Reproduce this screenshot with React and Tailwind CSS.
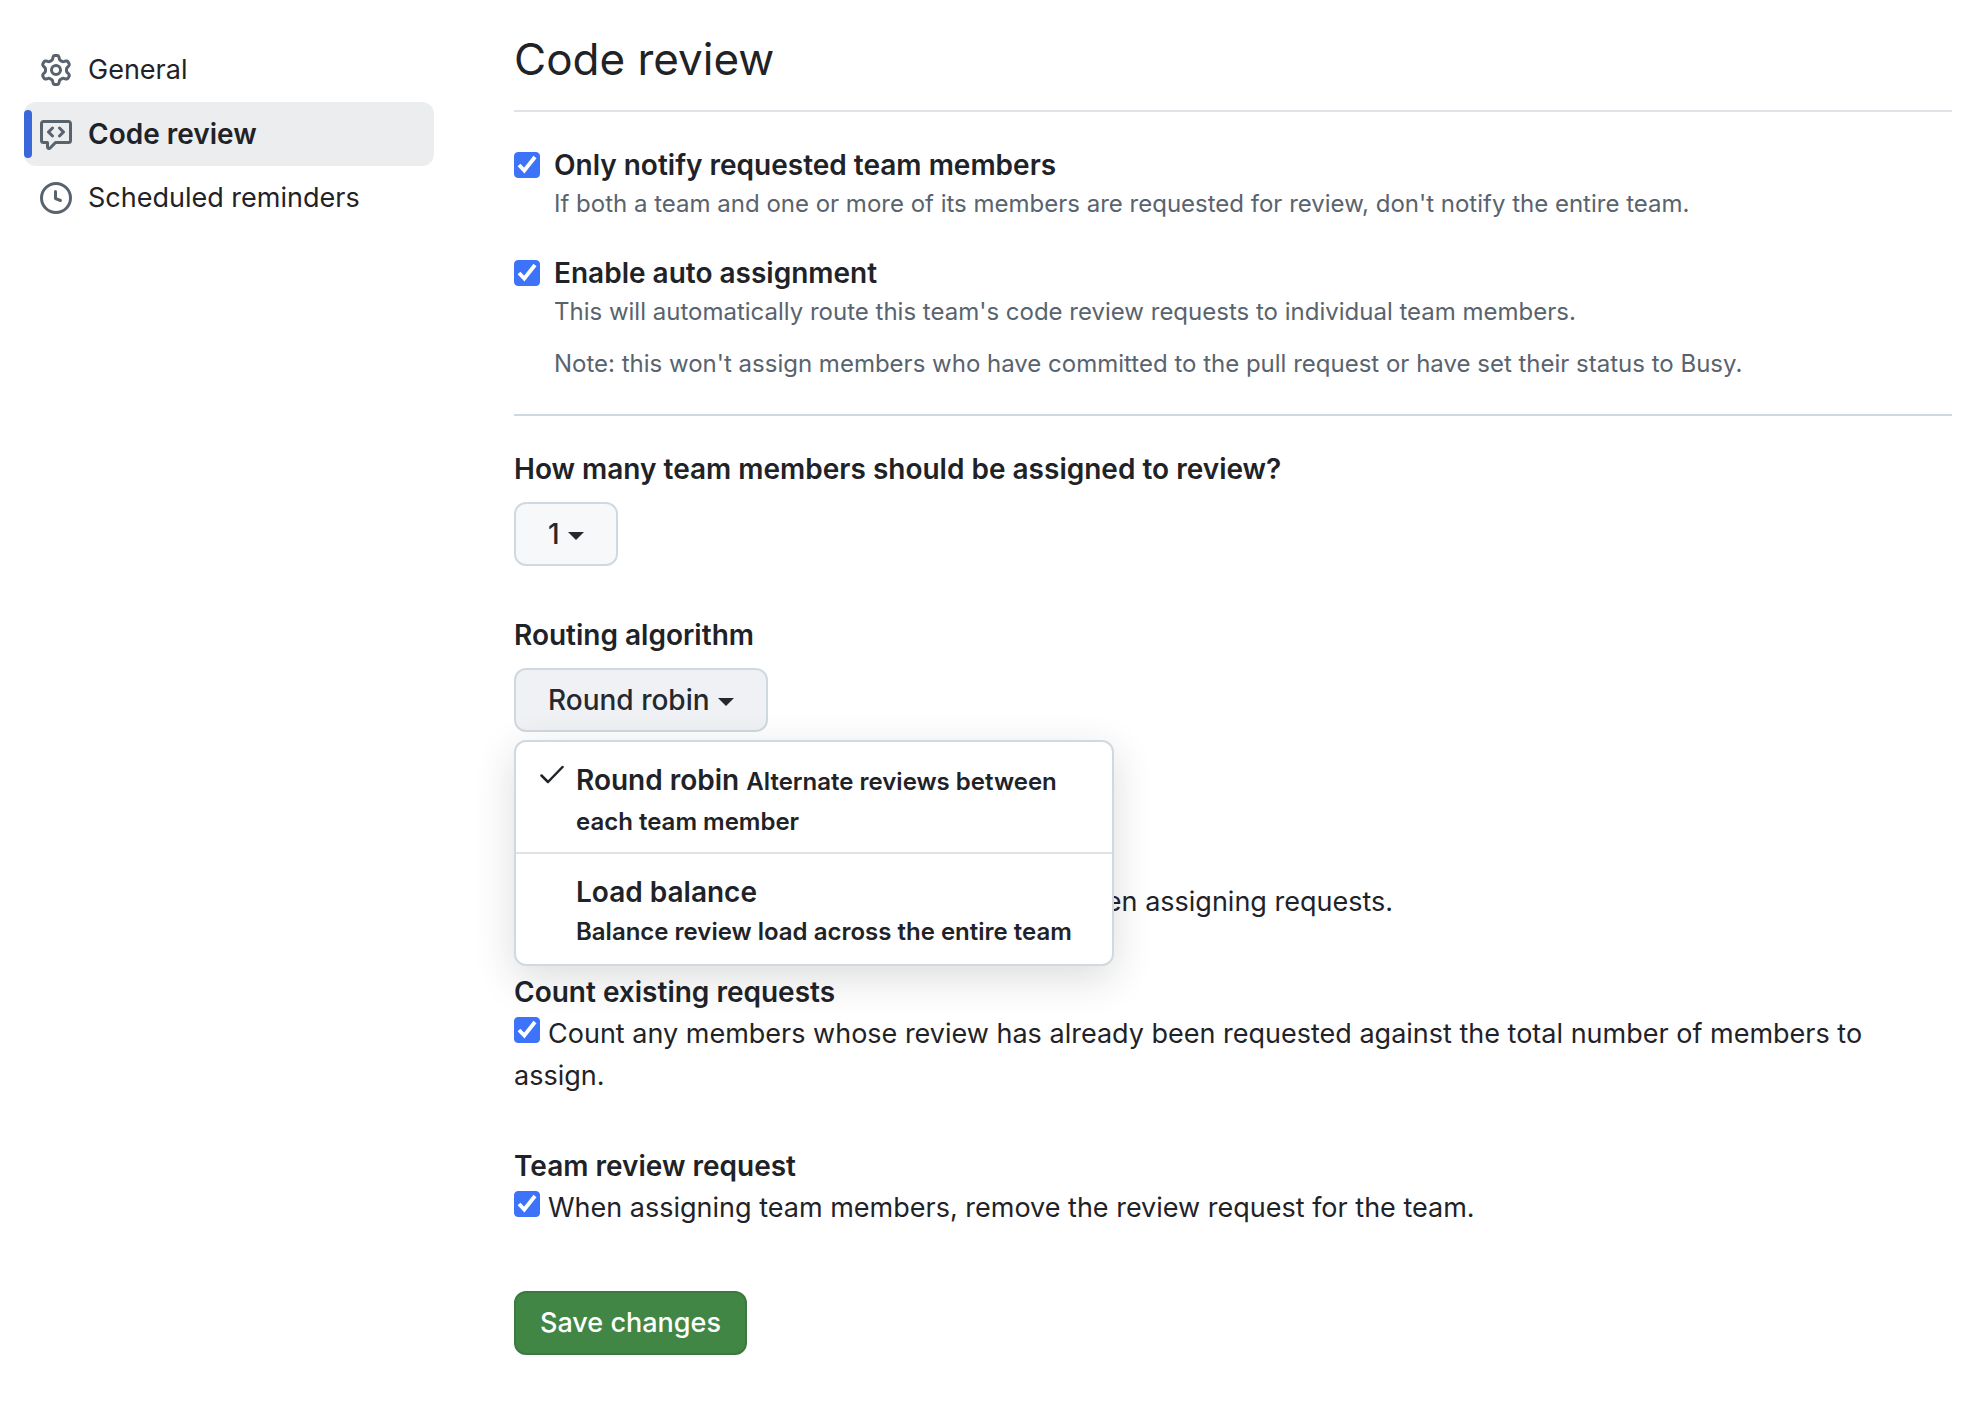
const ICONS = {
  gear: 'M8 0a8.2 8.2 0 0 1 .701.031C9.444.095 9.99.645 10.16 1.29l.288 1.107c.018.066.079.158.212.224.231.114.454.243.668.386.123.082.233.09.299.071l1.103-.303c.644-.176 1.392.021 1.82.63.27.385.506.792.704 1.218.315.675.111 1.422-.364 1.891l-.814.806c-.049.048-.098.147-.088.294.016.257.016.515 0 .772-.01.147.038.246.088.294l.814.806c.475.469.679 1.216.364 1.891a7.977 7.977 0 0 1-.704 1.217c-.428.61-1.176.807-1.82.63l-1.102-.302c-.067-.019-.177-.011-.3.071a5.909 5.909 0 0 1-.668.386c-.133.066-.194.158-.211.224l-.29 1.106c-.168.646-.715 1.196-1.458 1.26a8.006 8.006 0 0 1-1.402 0c-.743-.064-1.289-.614-1.458-1.26l-.289-1.106c-.018-.066-.079-.158-.212-.224a5.738 5.738 0 0 1-.668-.386c-.123-.082-.233-.09-.299-.071l-1.103.303c-.644.176-1.392-.021-1.82-.63a8.12 8.12 0 0 1-.704-1.218c-.315-.675-.111-1.422.363-1.891l.815-.806c.05-.048.098-.147.088-.294a6.214 6.214 0 0 1 0-.772c.01-.147-.038-.246-.088-.294l-.815-.806C.635 6.045.431 5.298.746 4.623a7.92 7.92 0 0 1 .704-1.217c.428-.61 1.176-.807 1.82-.63l1.102.302c.067.019.177.011.3-.071.214-.143.437-.272.668-.386.133-.066.194-.158.211-.224l.29-1.106C6.009.645 6.556.095 7.299.03 7.53.01 7.764 0 8 0Zm-.571 1.525c-.036.003-.108.036-.137.146l-.289 1.105c-.147.561-.549.967-.998 1.189-.173.086-.34.183-.5.29-.417.278-.97.423-1.529.27l-1.103-.303c-.109-.03-.175.016-.195.045-.22.312-.412.644-.573.99-.014.031-.021.11.059.19l.815.806c.411.406.562.957.53 1.456a4.709 4.709 0 0 0 0 .582c.032.499-.119 1.05-.53 1.456l-.815.806c-.081.08-.073.159-.059.19.162.346.353.677.573.989.02.03.085.076.195.046l1.102-.303c.56-.153 1.113-.008 1.53.27.161.107.328.204.501.29.447.222.85.629.997 1.189l.289 1.105c.029.109.101.143.137.146a6.6 6.6 0 0 0 1.142 0c.036-.003.108-.036.137-.146l.289-1.105c.147-.561.549-.967.998-1.189.173-.086.34-.183.5-.29.417-.278.97-.423 1.529-.27l1.103.303c.109.029.175-.016.195-.045.22-.313.411-.644.573-.99.014-.031.021-.11-.059-.19l-.815-.806c-.411-.406-.562-.957-.53-1.456a4.709 4.709 0 0 0 0-.582c-.032-.499.119-1.05.53-1.456l.815-.806c.081-.08.073-.159.059-.19a6.464 6.464 0 0 0-.573-.989c-.02-.03-.085-.076-.195-.046l-1.102.303c-.56.153-1.113.008-1.53-.27a4.44 4.44 0 0 0-.501-.29c-.447-.222-.85-.629-.997-1.189l-.289-1.105c-.029-.11-.101-.143-.137-.146a6.6 6.6 0 0 0-1.142 0ZM11 8a3 3 0 1 1-6 0 3 3 0 0 1 6 0ZM9.5 8a1.5 1.5 0 1 0-3.001.001A1.5 1.5 0 0 0 9.5 8Z',
  codeReview: 'M1.75 1h12.5c.966 0 1.75.784 1.75 1.75v8.5A1.75 1.75 0 0 1 14.25 13H8.061l-2.574 2.573A1.458 1.458 0 0 1 3 14.543V13H1.75A1.75 1.75 0 0 1 0 11.25v-8.5C0 1.784.784 1 1.75 1ZM1.5 2.75v8.5c0 .138.112.25.25.25h2a.75.75 0 0 1 .75.75v2.19l2.72-2.72a.749.749 0 0 1 .53-.22h6.5a.25.25 0 0 0 .25-.25v-8.5a.25.25 0 0 0-.25-.25H1.75a.25.25 0 0 0-.25.25Zm5.28 1.72a.75.75 0 0 1 0 1.06L5.31 7l1.47 1.47a.751.751 0 0 1-.018 1.042.751.751 0 0 1-1.042.018l-2-2a.75.75 0 0 1 0-1.06l2-2a.75.75 0 0 1 1.06 0Zm2.44 0a.75.75 0 0 1 1.06 0l2 2a.75.75 0 0 1 0 1.06l-2 2a.751.751 0 0 1-1.042-.018.751.751 0 0 1-.018-1.042L10.69 7 9.22 5.53a.75.75 0 0 1 0-1.06Z',
  clock: 'M8 0a8 8 0 1 1 0 16A8 8 0 0 1 8 0ZM1.5 8a6.5 6.5 0 1 0 13 0 6.5 6.5 0 0 0-13 0Zm7-3.25v2.992l2.028.812a.75.75 0 0 1-.557 1.392l-2.5-1A.751.751 0 0 1 7 8.25v-3.5a.75.75 0 0 1 1.5 0Z',
};

function NavItem({ icon, label, current }) {
  return (
    <li>
      <a
        href="#"
        aria-current={current ? 'page' : undefined}
        className={
          current
            ? 'relative flex h-16 items-center gap-4 rounded-xl bg-[#ecedef] px-4 text-[28px] font-semibold'
            : 'relative flex h-16 items-center gap-4 rounded-xl px-4'
        }
      >
        {current && <span className="absolute inset-y-2 left-0 w-2 rounded-full bg-[#3a67d9]" />}
        <svg viewBox="0 0 16 16" className="size-8 shrink-0 fill-[#59636e]" aria-hidden="true">
          <path d={ICONS[icon]} />
        </svg>
        {label}
      </a>
    </li>
  );
}

function Checkbox({ id }) {
  return (
    <span className="inline-grid shrink-0">
      <input
        id={id}
        type="checkbox"
        defaultChecked
        className="peer col-start-1 row-start-1 size-[26px] appearance-none rounded-sm border border-gray-400 bg-white checked:border-[#3d73f9] checked:bg-[#3d73f9]"
      />
      <svg
        viewBox="0 0 26 26"
        className="pointer-events-none invisible col-start-1 row-start-1 size-[26px] fill-none stroke-white peer-checked:visible"
        aria-hidden="true"
      >
        <path d="M5 13 10.3 18.5 21 5" strokeWidth="3.8" />
      </svg>
    </span>
  );
}

function Option({ id, title, children }) {
  return (
    <div className="flex gap-[14px]">
      <div className="flex items-start pt-2">
        <Checkbox id={id} />
      </div>
      <div>
        <label htmlFor={id} className="block text-[28px] font-semibold">
          {title}
        </label>
        <div className="flex flex-col gap-4 text-[24px] leading-9 text-[#59636e]">{children}</div>
      </div>
    </div>
  );
}

function InlineOption({ id, title, children }) {
  return (
    <section>
      <h2 className="text-[28px] font-semibold">{title}</h2>
      <Checkbox id={id} />
      <label htmlFor={id} className="ml-2">
        {children}
      </label>
    </section>
  );
}

function Caret() {
  return (
    <svg viewBox="0 0 16 8" className="mt-1 h-2 w-4 fill-current" aria-hidden="true">
      <path d="M0 0h16L8 8z" />
    </svg>
  );
}

export default function App() {
  return (
    <div className="flex gap-20 bg-white pr-[30px] pb-14 pl-6 font-['Inter',sans-serif] text-[27px] leading-[42px] text-[#1f2328]">
      <nav aria-label="Team settings" className="w-[410px] shrink-0 pt-[38px]">
        <ul>
          <NavItem icon="gear" label="General" />
          <NavItem icon="codeReview" label="Code review" current />
          <NavItem icon="clock" label="Scheduled reminders" />
        </ul>
      </nav>

      <main className="min-w-0 flex-1 pt-6">
        <h1 className="border-b-2 border-[#dfe3e8] pb-4 text-[44px] leading-[70px]">Code review</h1>

        <form onSubmit={(e) => e.preventDefault()}>
          <div className="flex flex-col gap-[30px] border-b-2 border-[#d1d9e0] py-8">
            <Option id="notify" title="Only notify requested team members">
              <p>If both a team and one or more of its members are requested for review, don't notify the entire team.</p>
            </Option>
            <Option id="auto" title="Enable auto assignment">
              <p>This will automatically route this team's code review requests to individual team members.</p>
              <p>Note: this won't assign members who have committed to the pull request or have set their status to Busy.</p>
            </Option>
          </div>

          <section className="mt-8">
            <h2 className="text-[28px] font-semibold">How many team members should be assigned to review?</h2>
            <button
              type="button"
              className="mt-3 flex h-16 items-center gap-2 rounded-xl border-2 border-[#d1d9e0] bg-[#f6f8fa] px-8 text-[28px] font-medium text-[#25292e]"
            >
              1 <Caret />
            </button>
          </section>

          <section className="relative mt-12">
            <h2 className="text-[28px] font-semibold">Routing algorithm</h2>
            <button
              type="button"
              aria-haspopup="menu"
              aria-expanded="true"
              className="mt-3 flex h-16 items-center gap-2 rounded-xl border-2 border-[#d1d9e0] bg-[#eff1f5] px-8 text-[28px] font-medium text-[#25292e]"
            >
              Round robin <Caret />
            </button>
            <div
              role="menu"
              className="absolute top-full left-0 z-10 mt-2 w-[600px] rounded-xl border-2 border-[#d1d9e0] bg-white text-[28px] leading-10 font-semibold shadow-[0_12px_40px_rgba(31,35,40,0.16)]"
            >
              <button
                type="button"
                role="menuitemradio"
                aria-checked="true"
                className="flex w-full gap-3 border-b-2 border-[#dfe3e8] pt-[18px] pr-6 pb-3 pl-6 text-left"
              >
                <svg
                  viewBox="0 0 24 24"
                  className="mt-1 size-6 shrink-0 fill-none stroke-current"
                  strokeWidth="2.5"
                  strokeLinecap="round"
                  strokeLinejoin="round"
                  aria-hidden="true"
                >
                  <path d="M1.5 11.5 8 18 22.5 3" />
                </svg>
                <span>
                  Round robin <span className="text-[24px] leading-9">Alternate reviews between each team member</span>
                </span>
              </button>
              <button
                type="button"
                role="menuitemradio"
                aria-checked="false"
                className="flex w-full flex-col pt-[18px] pr-6 pb-3 pl-[60px] text-left"
              >
                <span>Load balance</span>
                <span className="text-[24px] whitespace-nowrap">Balance review load across the entire team</span>
              </button>
            </div>
          </section>

          <div className="mt-[107px] flex flex-col gap-12">
            <InlineOption id="skip" title="Never assign certain team members">
              Certain team members will not be asked when assigning requests.
            </InlineOption>
            <InlineOption id="count" title="Count existing requests">
              Count any members whose review has already been requested against the total number of members to
              assign.
            </InlineOption>
            <InlineOption id="team" title="Team review request">
              When assigning team members, remove the review request for the team.
            </InlineOption>
          </div>

          <button
            type="submit"
            className="mt-[62px] h-16 rounded-xl border-2 border-[#3b7a3f] bg-[#418644] px-6 font-medium text-white"
          >
            Save changes
          </button>
        </form>
      </main>
    </div>
  );
}
